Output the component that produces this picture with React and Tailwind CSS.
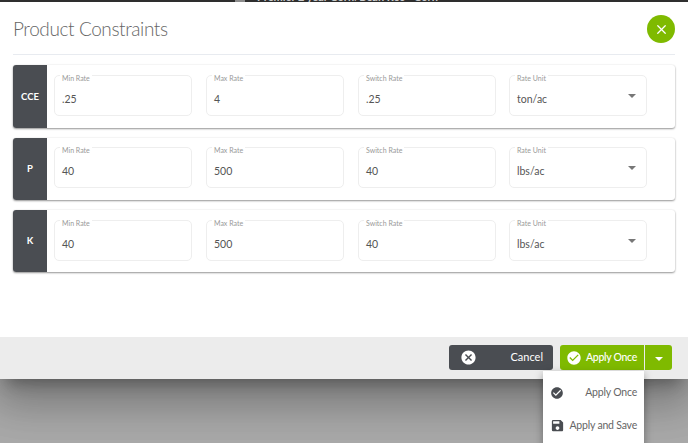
import { MdCancel, MdCheckCircle, MdSave } from "react-icons/md";
import { X } from "lucide-react";

const products = [
  { name: "CCE", min: ".25", max: "4", sw: ".25", unit: "ton/ac", h: "h-[63px]", pad: "pt-[10px]" },
  { name: "P", min: "40", max: "500", sw: "40", unit: "lbs/ac", h: "h-[62px]", pad: "pt-[9px]" },
  { name: "K", min: "40", max: "500", sw: "40", unit: "lbs/ac", h: "h-[62px]", pad: "pt-[10px]" },
];

function Field({ label, value, select }) {
  return (
    <div className="relative h-[41px] w-[138px] shrink-0 rounded-[5px] border border-[#eeeeee] bg-white">
      <span className="absolute -top-[2px] left-[5px] bg-white px-[2px] text-[7px] leading-[8px] text-[#999]">
        {label}
      </span>
      <div className="pl-[7px] pt-[15px] text-[10.5px] leading-[16px] text-[#555]">{value}</div>
      {select && (
        <span className="absolute right-[10px] top-[18px] h-0 w-0 border-x-[4px] border-t-[4px] border-x-transparent border-t-[#777]" />
      )}
    </div>
  );
}

function ProductCard({ product }) {
  return (
    <div className={`flex ${product.h} rounded-[3px] bg-white shadow-[0_1px_2px_rgba(0,0,0,0.4),0_0_2px_rgba(0,0,0,0.08)]`}>
      <div className="flex w-[34px] items-center justify-center rounded-l-[3px] bg-[#4a4d52] pt-px text-[9.5px] font-bold text-white">
        {product.name}
      </div>
      <div className={`flex gap-[14px] pl-[7px] ${product.pad}`}>
        <Field label="Min Rate" value={product.min} />
        <Field label="Max Rate" value={product.max} />
        <Field label="Switch Rate" value={product.sw} />
        <div className="-ml-px">
          <Field label="Rate Unit" value={product.unit} select />
        </div>
      </div>
    </div>
  );
}

export default function App() {
  return (
    <div className="relative h-[443px] w-[688px] overflow-hidden bg-[#a9a9a9] font-['Lato',sans-serif]">
      <div className="flex h-[2px] items-end overflow-hidden bg-[#333]">
        <div className="ml-[235px] h-[2px] w-[10px] bg-[#999]" />
        <span className="ml-[12px] whitespace-nowrap text-[11px] leading-[10px] font-bold text-[#ddd]">
          Premier 2 year Corn/Bean Rec - Corn
        </span>
      </div>

      <div className="relative flex h-[377px] flex-col bg-white shadow-[0_11px_15px_-7px_rgba(0,0,0,0.3),0_24px_38px_3px_rgba(0,0,0,0.2),0_9px_46px_8px_rgba(0,0,0,0.12)]">
        <div className="mx-[13px] flex h-[53px] items-center justify-between border-b border-[#e8ebf0] pt-[2px]">
          <h1 className="text-[19px] font-light tracking-[-0.4px] text-[#666]">Product Constraints</h1>
          <button className="flex h-[28px] w-[28px] items-center justify-center rounded-full bg-[#7fba00] text-white">
            <X size={15} strokeWidth={2} />
          </button>
        </div>

        <div className="mx-[13px] mt-[10px] flex flex-col gap-[10px]">
          {products.map((p) => (
            <ProductCard key={p.name} product={p} />
          ))}
        </div>

        <div className="mt-auto flex h-[42px] items-start justify-end gap-[7px] bg-[#ececec] pr-[16px] pt-[8px]">
          <button className="flex h-[25px] w-[104px] items-center justify-between rounded-[3px] bg-[#4a4d52] pl-[11px] pr-[10px] text-[11px] text-white">
            <MdCancel size={17} className="text-white" />
            Cancel
          </button>
          <div className="flex h-[25px] gap-px">
            <button className="flex w-[84px] items-center justify-between rounded-l-[3px] bg-[#7fba00] pl-[6px] pr-[7px] text-[10.5px] font-medium tracking-[-0.3px] text-white">
              <MdCheckCircle size={16} className="text-white" />
              Apply Once
            </button>
            <button className="flex w-[27px] items-center justify-center rounded-r-[3px] bg-[#7fba00]">
              <span className="mt-[2px] h-0 w-0 border-x-[4px] border-t-[4px] border-x-transparent border-t-white" />
            </button>
          </div>
        </div>

        <div className="absolute left-[543px] top-[369px] h-[80px] w-[101px] bg-white pt-[6px] text-[10.5px] tracking-[-0.2px] text-[#666] shadow-[0_3px_8px_rgba(0,0,0,0.35)]">
          <div className="flex h-[32px] items-center justify-between pl-[7px] pr-[7px] whitespace-nowrap">
            <MdCheckCircle size={14} className="text-[#4a4d52]" />
            Apply Once
          </div>
          <div className="flex h-[33px] items-center justify-between pl-[7px] pr-[7px] whitespace-nowrap">
            <MdSave size={15} className="text-[#4a4d52]" />
            Apply and Save
          </div>
        </div>
      </div>
    </div>
  );
}
